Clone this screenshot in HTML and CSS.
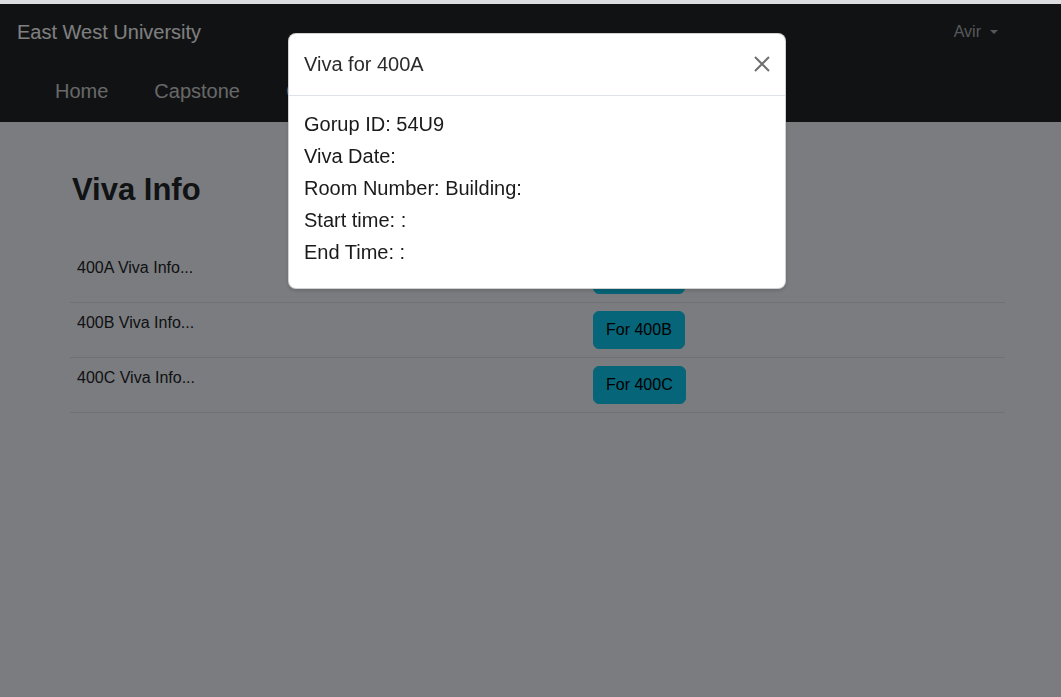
FILE: index.html
```html
<!DOCTYPE html>
<html lang="en">
<head>
<meta charset="utf-8">
<title>Viva Info</title>
<link rel="stylesheet" href="styles.css">
</head>
<body>
<div class="strip"></div>
<nav class="navbar">
  <div class="nav-top">
    <a class="brand" href="#">East West University</a>
    <div class="user">Avir <span class="caret"></span></div>
  </div>
  <ul class="nav-links">
    <li><a href="#">Home</a></li>
    <li><a href="#">Capstone</a></li>
    <li><a href="#">Committee</a></li>
  </ul>
</nav>

<main class="container">
  <h2 class="title">Viva Info</h2>
  <table class="info-table">
    <tbody>
      <tr><td class="c1">400A Viva Info...</td><td class="c2"><button class="btn">For 400A</button></td></tr>
      <tr><td class="c1">400B Viva Info...</td><td class="c2"><button class="btn">For 400B</button></td></tr>
      <tr><td class="c1">400C Viva Info...</td><td class="c2"><button class="btn">For 400C</button></td></tr>
    </tbody>
  </table>
</main>

<div class="backdrop"></div>

<div class="modal">
  <div class="modal-header">
    <h5 class="modal-title">Viva for 400A</h5>
    <button class="close" aria-label="Close">
      <svg width="16" height="16" viewBox="0 0 16 16"><path d="M1 1L15 15M15 1L1 15" stroke="#6f6f6f" stroke-width="2" fill="none"/></svg>
    </button>
  </div>
  <div class="modal-body">
    <p class="line">Gorup ID: 54U9</p>
    <p class="line">Viva Date: </p>
    <p class="line">Room Number: Building: </p>
    <p class="line">Start time: :</p>
    <p class="line">End Time: :</p>
  </div>
</div>
</body>
</html>
```

FILE: styles.css
```css
* { box-sizing: border-box; }

html, body {
  margin: 0;
  padding: 0;
  height: 100%;
}

body {
  font-family: "Liberation Sans", Arial, sans-serif;
  font-size: 16px;
  line-height: 1.5;
  color: #212529;
  background: #f6f8ff;
}

.strip {
  height: 4px;
  background: #dcdde1;
}

.navbar {
  background: #222529;
  height: 118px;
  padding: 8px 0 8px 16px;
  display: flex;
  flex-direction: column;
}

.nav-top {
  display: flex;
  justify-content: space-between;
  align-items: center;
  height: 40px;
}

.brand {
  font-size: 20px;
  line-height: 30px;
  color: #ffffff;
  text-decoration: none;
  padding-left: 1px;
}

.user {
  font-size: 16px;
  color: #abafb4;
  margin-right: 63px;
  margin-top: 0;
  display: flex;
  align-items: center;
}

.caret {
  display: inline-block;
  margin-left: 9px;
  width: 0;
  height: 0;
  border-left: 4px solid transparent;
  border-right: 4px solid transparent;
  border-top: 4px solid #abafb4;
}

.nav-links {
  list-style: none;
  margin: 16px 0 0 0;
  padding: 0 0 0 39px;
  display: flex;
  gap: 46px;
}

.nav-links a {
  font-size: 20px;
  line-height: 30px;
  padding: 8px 0;
  display: block;
  color: #d0d0d0;
  text-decoration: none;
}

.container {
  padding: 49px 0 0 70px;
  width: 1005px;
}

.title {
  font-size: 31px;
  font-weight: 700;
  line-height: 38px;
  margin: 0 0 39px 2px;
}

.info-table {
  width: 935px;
  border-collapse: collapse;
}

.info-table td {
  border-bottom: 1px solid #dee2e6;
  padding: 8px 7px;
  vertical-align: top;
}

.c1 { width: 515px; }

.btn {
  font-family: inherit;
  font-size: 16px;
  line-height: 24px;
  padding: 6px 12px;
  background: #0dcaf0;
  border: 1px solid #0dcaf0;
  border-radius: 6px;
  color: #000;
  margin-left: 1px;
}

.backdrop {
  position: fixed;
  top: 4px;
  left: 0;
  right: 0;
  bottom: 0;
  background: rgba(0, 0, 0, 0.5);
}

.modal {
  position: fixed;
  top: 33px;
  left: 288px;
  width: 498px;
  background: #fff;
  border: 1px solid rgba(0, 0, 0, 0.18);
  border-radius: 8px;
  box-shadow: 0 2px 4px rgba(0, 0, 0, 0.15);
}

.modal-header {
  display: flex;
  align-items: center;
  justify-content: space-between;
  padding: 15px 15px 16px 15px;
  border-bottom: 1px solid #dee2e6;
}

.modal-title {
  margin: 0;
  font-size: 20px;
  font-weight: 400;
  line-height: 30px;
  color: #2b2b2b;
}

.close {
  background: none;
  border: 0;
  padding: 0;
  margin-right: 0;
  width: 16px;
  height: 16px;
  display: flex;
}

.modal-body {
  padding: 16px 15px;
}

.line {
  margin: 0 0 8px 0;
  font-size: 20px;
  line-height: 24px;
  color: #1a1a1a;
}
```
